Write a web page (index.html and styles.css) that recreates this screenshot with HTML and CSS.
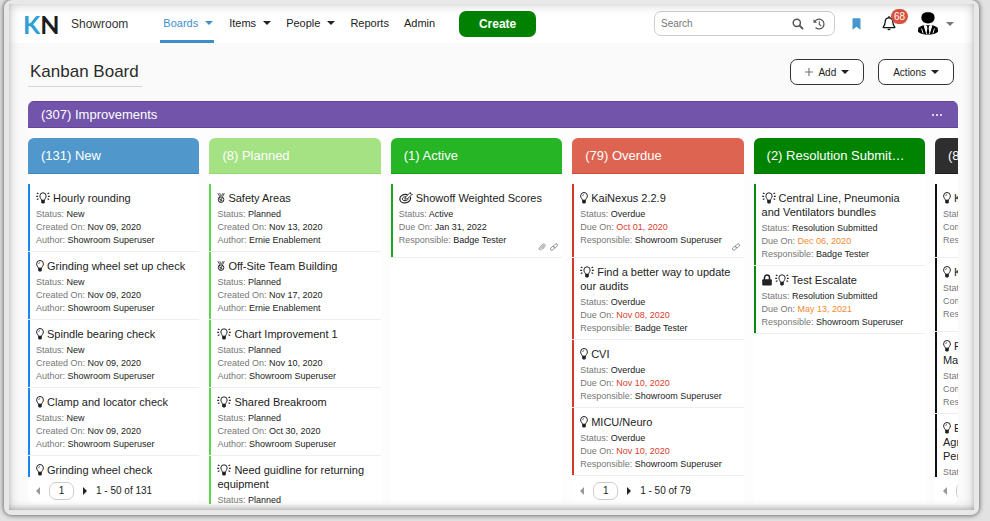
FILE: index.html
```html
<!DOCTYPE html>
<html lang="en">
<head>
<meta charset="utf-8">
<title>Kanban Board</title>
<link rel="stylesheet" href="styles.css">
</head>
<body>
<svg class="sprite" aria-hidden="true">
  <symbol id="bulb" viewBox="0 0 8 12"><path d="M2.500 8.200C2.400 6.900.6 6 .6 3.900a3.400 3.400 0 0 1 6.800 0C7.400 6 5.600 6.900 5.500 8.200z" fill="none" stroke="currentColor"/><path d="M2.200 8h3.600v2.400L4.900 11.600H3.100l-.9-1.200z" fill="currentColor"/><path d="M2.600 4A1.500 1.500 0 0 1 4 2.500" fill="none" stroke="currentColor" stroke-width=".6"/></symbol>
  <symbol id="bulb-lit" viewBox="0 0 14 12"><path d="M5.500 8.200C5.400 6.900 3.900 6 3.900 3.900a3.100 3.100 0 0 1 6.200 0C10.100 6 8.600 6.900 8.500 8.200z" fill="none" stroke="currentColor"/><path d="M5.200 8h3.600v2.400l-.9 1.200H6.100l-.9-1.200z" fill="currentColor"/><path d="M.8 1l1.700.8M.2 4.300h1.900M.8 7.500l1.700-.8M13.200 1l-1.700.8M13.800 4.300h-1.900M13.200 7.500l-1.700-.8" stroke="currentColor" stroke-width="1.200"/></symbol>
  <symbol id="medal" viewBox="0 0 9 12"><path d="M1 .6l2.300 4.200M3 .6l1.700 3.600M8.200.6L6.300 4.600M6.600.6L5.300 3.400" stroke="currentColor" fill="none" stroke-width=".9"/><circle cx="4.600" cy="7.900" r="3.100" fill="none" stroke="currentColor" stroke-width="1.100"/><path d="M.8 5.300l2.600 2.500 2.800-1.300M3.200 9.500l2.900-.7M4.700 6.700v3" stroke="currentColor" fill="none" stroke-width=".9"/></symbol>
  <symbol id="target" viewBox="0 0 14 12"><path d="M8.500 2.700C4.600 1.600.8 3.800.8 6.900c0 2.300 2.200 4 5.200 4s5.600-2 5.600-4.600c0-.6-.1-1-.3-1.400" fill="none" stroke="currentColor" stroke-width="1.200"/><path d="M7 4.900c-2-.3-3.700.6-3.700 2 0 1.100 1.100 1.800 2.700 1.800 1.800 0 3.100-.9 3.200-2.100" fill="none" stroke="currentColor"/><path d="M5.800 7.200l.7-2L10.300 1.400l.9-1 .4 1.600 1.700.3-1 1-4 3.400z" fill="none" stroke="currentColor" stroke-width=".9"/></symbol>
  <symbol id="lock" viewBox="0 0 10 12"><path d="M2.500 6V3.500a2.500 2.500 0 0 1 5 0V6" fill="none" stroke="currentColor" stroke-width="1.500"/><rect x=".2" y="5.300" width="9.600" height="6.200" rx="1" fill="currentColor"/></symbol>
  <symbol id="clip" viewBox="0 0 8 8"><path d="M2.300 5.500l2.600-3c.7-.7 1.600.1 1 .8L3.300 6.500C2.300 7.600.3 6.500 1.300 5l3-3.500C5.800 0 8 1.600 6.900 3.300L4.500 6.200" fill="none" stroke="currentColor" stroke-width=".8"/></symbol>
  <symbol id="link" viewBox="0 0 8 8"><g fill="none" stroke="currentColor" stroke-width=".9"><rect x="3.200" y="1.500" width="4.600" height="2.700" rx="1.350" transform="rotate(-45 5.500 2.850)"/><rect x=".2" y="3.900" width="4.600" height="2.700" rx="1.350" transform="rotate(-45 2.500 5.250)"/></g></symbol>
</svg>

<div class="frame">
  <header class="topbar">
    <a class="logo" href="#"><span class="logo-k">K</span>N</a>
    <span class="site">Showroom</span>
    <nav class="nav">
      <a class="nav-link current" href="#">Boards<i class="caret"></i></a>
      <a class="nav-link" href="#">Items<i class="caret"></i></a>
      <a class="nav-link" href="#">People<i class="caret"></i></a>
      <a class="nav-link" href="#">Reports</a>
      <a class="nav-link" href="#">Admin</a>
    </nav>
    <button class="create" type="button">Create</button>
    <div class="tools">
      <div class="search">
        <input class="search-input" type="search" placeholder="Search" aria-label="Search">
        <svg class="search-icon" viewBox="0 0 12 12"><circle cx="4.800" cy="4.800" r="3.600" fill="none" stroke="currentColor" stroke-width="1.500"/><path d="M7.500 7.500l3.600 3.600" stroke="currentColor" stroke-width="1.800"/></svg>
        <svg class="search-icon" viewBox="0 0 12 12"><path d="M1.700 3.800A4.900 4.900 0 1 1 2.600 9.500" fill="none" stroke="currentColor" stroke-width="1.200"/><path d="M.5 1.300v3.500h3.600z" fill="currentColor"/><path d="M6.300 3.200v3.200l2 1.300" fill="none" stroke="currentColor" stroke-width="1.100"/></svg>
      </div>
      <button class="icon-button bookmark" type="button" aria-label="Bookmarks"><svg viewBox="0 0 9 12"><path d="M.5 1.200q0-1 1-1h6q1 0 1 1v10.500l-4-3-4 3z" fill="currentColor"/></svg></button>
      <button class="icon-button bell" type="button" aria-label="Notifications"><svg viewBox="0 0 14 15"><path d="M7 1.800c-2.400 0-3.800 1.700-3.800 4 0 3.200-.9 4.200-2 5.300v.5h11.600v-.5c-1.100-1.100-2-2.100-2-5.300 0-2.300-1.400-4-3.800-4z" fill="none" stroke="currentColor" stroke-width="1.300" stroke-linejoin="round"/><path d="M6.200.3h1.600v1.500H6.200zM5.400 12.700h3.200a1.600 1.600 0 0 1-3.200 0z" fill="currentColor"/></svg><span class="badge">68</span></button>
      <button class="icon-button account" type="button" aria-label="Account"><svg viewBox="0 0 20 23"><path d="M10 .2c4.300 0 6.600 1.600 6.600 5.600 0 3.500-2.900 5.700-6.600 5.700S3.400 9.300 3.400 5.800C3.400 1.800 5.700.2 10 .2z"/><path d="M5.200 13.300L.8 15.300C.1 16.500 0 18 0 19.800 2 21.600 5.500 22.800 10 22.800s8-1.200 10-3c0-1.800-.1-3.300-.8-4.500l-4.400-2z"/><path d="M5.600 13.600l2-.7L10 15l2.400-2.100 2 .7-2.700 8.600H8.300z" fill="#fff"/><path d="M8.900 14.200h2.200l-.5 2 .8 4.700-1.400 1.500-1.400-1.500.8-4.700z"/><path d="M3.600 16.500l1.500 5M16.400 16.500l-1.500 5" stroke="#fff" stroke-width=".9"/></svg><i class="caret"></i></button>
    </div>
  </header>

  <main class="page">
    <div class="page-head">
      <h1 class="page-title">Kanban Board</h1>
      <div class="actions">
        <button class="outline" type="button"><svg class="plus" viewBox="0 0 8 8"><path d="M4 0v8M0 4h8" stroke="currentColor" stroke-width="1.200"/></svg>Add<i class="caret"></i></button>
        <button class="outline" type="button">Actions<i class="caret"></i></button>
      </div>
    </div>

    <section class="board">
      <div class="board-head"><h2 class="board-title">(307) Improvements</h2><button class="more" type="button" aria-label="More"><i></i><i></i><i></i></button></div>
      <div class="columns">

        <section class="column new">
          <h3 class="column-head">(131) New</h3>
          <ul class="cards">
            <li class="card"><h4><svg class="ico wide"><use href="#bulb-lit"/></svg>Hourly rounding</h4><p>Status: <b>New</b></p><p>Created On: <b>Nov 09, 2020</b></p><p>Author: <b>Showroom Superuser</b></p></li>
            <li class="card"><h4><svg class="ico"><use href="#bulb"/></svg>Grinding wheel set up check</h4><p>Status: <b>New</b></p><p>Created On: <b>Nov 09, 2020</b></p><p>Author: <b>Showroom Superuser</b></p></li>
            <li class="card"><h4><svg class="ico"><use href="#bulb"/></svg>Spindle bearing check</h4><p>Status: <b>New</b></p><p>Created On: <b>Nov 09, 2020</b></p><p>Author: <b>Showroom Superuser</b></p></li>
            <li class="card"><h4><svg class="ico"><use href="#bulb"/></svg>Clamp and locator check</h4><p>Status: <b>New</b></p><p>Created On: <b>Nov 09, 2020</b></p><p>Author: <b>Showroom Superuser</b></p></li>
            <li class="card"><h4><svg class="ico"><use href="#bulb"/></svg>Grinding wheel check</h4></li>
          </ul>
          <div class="pager"><button class="step prev" type="button" aria-label="Previous page" disabled></button><input class="page-no" type="text" value="1" aria-label="Page"><button class="step next" type="button" aria-label="Next page"></button><span>1 - 50 of 131</span></div>
        </section>

        <section class="column planned">
          <h3 class="column-head">(8) Planned</h3>
          <ul class="cards">
            <li class="card"><h4><svg class="ico"><use href="#medal"/></svg>Safety Areas</h4><p>Status: <b>Planned</b></p><p>Created On: <b>Nov 13, 2020</b></p><p>Author: <b>Ernie Enablement</b></p></li>
            <li class="card"><h4><svg class="ico"><use href="#medal"/></svg>Off-Site Team Building</h4><p>Status: <b>Planned</b></p><p>Created On: <b>Nov 17, 2020</b></p><p>Author: <b>Ernie Enablement</b></p></li>
            <li class="card"><h4><svg class="ico wide"><use href="#bulb-lit"/></svg>Chart Improvement 1</h4><p>Status: <b>Planned</b></p><p>Created On: <b>Nov 10, 2020</b></p><p>Author: <b>Showroom Superuser</b></p></li>
            <li class="card"><h4><svg class="ico wide"><use href="#bulb-lit"/></svg>Shared Breakroom</h4><p>Status: <b>Planned</b></p><p>Created On: <b>Oct 30, 2020</b></p><p>Author: <b>Showroom Superuser</b></p></li>
            <li class="card"><h4><svg class="ico wide"><use href="#bulb-lit"/></svg>Need guidline for returning equipment</h4><p>Status: <b>Planned</b></p></li>
          </ul>
        </section>

        <section class="column active">
          <h3 class="column-head">(1) Active</h3>
          <ul class="cards">
            <li class="card attached"><h4><svg class="ico wide"><use href="#target"/></svg>Showoff Weighted Scores</h4><p>Status: <b>Active</b></p><p>Due On: <b>Jan 31, 2022</b></p><p>Responsible: <b>Badge Tester</b></p><div class="attachments"><svg><use href="#clip"/></svg><svg><use href="#link"/></svg></div></li>
          </ul>
        </section>

        <section class="column overdue">
          <h3 class="column-head">(79) Overdue</h3>
          <ul class="cards">
            <li class="card attached"><h4><svg class="ico"><use href="#bulb"/></svg>KaiNexus 2.2.9</h4><p>Status: <b>Overdue</b></p><p>Due On: <b class="late">Oct 01, 2020</b></p><p>Responsible: <b>Showroom Superuser</b></p><div class="attachments"><svg><use href="#link"/></svg></div></li>
            <li class="card"><h4><svg class="ico wide"><use href="#bulb-lit"/></svg>Find a better way to update our audits</h4><p>Status: <b>Overdue</b></p><p>Due On: <b class="late">Nov 08, 2020</b></p><p>Responsible: <b>Badge Tester</b></p></li>
            <li class="card"><h4><svg class="ico"><use href="#bulb"/></svg>CVI</h4><p>Status: <b>Overdue</b></p><p>Due On: <b class="late">Nov 10, 2020</b></p><p>Responsible: <b>Showroom Superuser</b></p></li>
            <li class="card"><h4><svg class="ico"><use href="#bulb"/></svg>MICU/Neuro</h4><p>Status: <b>Overdue</b></p><p>Due On: <b class="late">Nov 10, 2020</b></p><p>Responsible: <b>Showroom Superuser</b></p></li>
          </ul>
          <div class="pager"><button class="step prev" type="button" aria-label="Previous page" disabled></button><input class="page-no" type="text" value="1" aria-label="Page"><button class="step next" type="button" aria-label="Next page"></button><span>1 - 50 of 79</span></div>
        </section>

        <section class="column resolved">
          <h3 class="column-head">(2) Resolution Submitted</h3>
          <ul class="cards">
            <li class="card"><h4><svg class="ico wide"><use href="#bulb-lit"/></svg>Central Line, Pneumonia and Ventilators bundles</h4><p>Status: <b>Resolution Submitted</b></p><p>Due On: <b class="soon">Dec 06, 2020</b></p><p>Responsible: <b>Badge Tester</b></p></li>
            <li class="card"><h4><svg class="ico lock"><use href="#lock"/></svg><svg class="ico wide"><use href="#bulb-lit"/></svg>Test Escalate</h4><p>Status: <b>Resolution Submitted</b></p><p>Due On: <b class="soon">May 13, 2021</b></p><p>Responsible: <b>Showroom Superuser</b></p></li>
          </ul>
        </section>

        <section class="column complete">
          <h3 class="column-head">(8)</h3>
          <ul class="cards">
            <li class="card attached"><h4><svg class="ico"><use href="#bulb"/></svg>K</h4><p>Status:</p><p>Completed</p><p>Responsible:</p></li>
            <li class="card attached"><h4><svg class="ico"><use href="#bulb"/></svg>K</h4><p>Status:</p><p>Completed</p><p>Responsible:</p></li>
            <li class="card"><h4><svg class="ico"><use href="#bulb"/></svg>F<br>Ma</h4><p>Status:</p><p>Completed</p><p>Responsible:</p></li>
            <li class="card"><h4><svg class="ico"><use href="#bulb"/></svg>E<br>Agr<br>Per</h4><p>Status:</p></li>
          </ul>
          <div class="pager"><button class="step prev" type="button" aria-label="Previous page" disabled></button><input class="page-no" type="text" value="1" aria-label="Page"></div>
        </section>

      </div>
    </section>
  </main>
</div>
</body>
</html>
```
FILE: styles.css
```css
* { box-sizing: border-box; }

body, h1, h2, h3, h4, p, ul { margin: 0; padding: 0; font-weight: normal; }

body {
  display: flex;
  height: 100vh;
  padding: 0 11px 6px 4px;
  overflow: hidden;
  background: #e2e2e2;
  color: #222;
  font-family: "Liberation Sans", Arial, Helvetica, sans-serif;
  font-size: 10px;
}

button, input { font: inherit; color: inherit; }
button { padding: 0; border: 0; background: none; }
a { color: inherit; text-decoration: none; }
.sprite { position: absolute; width: 0; height: 0; }

/* Window frame */
.frame {
  position: relative;
  display: flex;
  flex: 1;
  flex-direction: column;
  min-width: 0;
  border: 5px solid #e8e8e8;
  border-top-width: 4px;
  border-radius: 8px;
  background: #fafafa;
  box-shadow: 0 0 4px 1px rgba(0, 0, 0, .5);
}

.frame::after {
  content: "";
  position: absolute;
  inset: 0;
  box-shadow: inset 0 0 12px rgba(0, 0, 0, .22), inset 0 -2px 4px rgba(0, 0, 0, .16);
  pointer-events: none;
}

.caret {
  display: inline-block;
  border: 4px solid transparent;
  border-top: 4px solid currentColor;
  border-bottom: 0;
}

/* Top bar */
.topbar {
  display: flex;
  align-items: center;
  height: 39px;
  padding: 0 20px 0 14px;
  background: #fff;
}

.logo {
  width: 48px;
  font-family: Lato, "Liberation Sans", sans-serif;
  font-size: 25px;
  font-weight: bold;
  line-height: 36px;
  color: #1c1c1c;
}

.logo-k { color: #2f9fd6; }
.site { font-size: 12px; color: #333; }

.nav {
  display: flex;
  align-self: stretch;
  gap: 12px;
  margin-left: 32px;
}

.nav-link {
  display: flex;
  align-items: center;
  gap: 7px;
  padding: 2px 0 0 3px;
  border-bottom: 3px solid transparent;
  font-size: 11px;
}

.nav-link.current {
  padding-right: 1px;
  border-color: #3d8fca;
  color: #3d8fca;
}

.create {
  width: 77px;
  height: 26px;
  margin: 0 12px 0 24px;
  border-radius: 7px;
  background: #008200;
  color: #fff;
  font-size: 12px;
  font-weight: bold;
}

.tools {
  display: flex;
  align-items: center;
  margin-left: auto;
}

.search {
  display: flex;
  align-items: center;
  gap: 9px;
  width: 181px;
  height: 25px;
  padding: 0 9px 0 6px;
  border: 1px solid #ccc;
  border-radius: 7px;
  background: #fff;
  color: #555;
}

.search-input {
  flex: 1;
  min-width: 0;
  padding: 0;
  border: 0;
  outline: 0;
  background: none;
}

.search-input::placeholder { color: #777; }
.search-icon { width: 12px; height: 12px; }
.icon-button { position: relative; display: flex; align-items: center; }
.bookmark { margin-left: 17px; color: #4595cf; }
.bookmark svg { width: 9px; height: 12px; }
.bell { margin-left: 21px; color: #111; }
.bell svg { width: 14px; height: 15px; }

.badge {
  position: absolute;
  top: -7px;
  left: 9px;
  width: 17px;
  border-radius: 8px;
  background: #d9523c;
  color: #fff;
  line-height: 15px;
  text-align: center;
}

.account { gap: 8px; margin-left: 22px; color: #777; }
.account svg { width: 20px; height: 23px; fill: #000; }

/* Page */
.page {
  display: flex;
  flex: 1;
  flex-direction: column;
  min-height: 0;
  padding: 0 16px 6px 19px;
}

.page-head {
  display: flex;
  align-items: center;
  justify-content: space-between;
  height: 58px;
  padding-right: 4px;
}

.page-title {
  padding: 1px 3px 0 2px;
  border-bottom: 1px solid #d4d4d4;
  font-size: 17px;
  line-height: 28px;
  color: #2c2c2c;
}

.actions { display: flex; gap: 14px; }

.outline {
  display: flex;
  align-items: center;
  justify-content: center;
  gap: 5px;
  height: 26px;
  padding: 0 14px;
  border: 1px solid #333;
  border-radius: 7px;
  background: #fff;
}

.plus { width: 8px; height: 8px; color: #777; }

/* Board */
.board {
  display: flex;
  flex: 1;
  flex-direction: column;
  gap: 10px;
  min-height: 0;
  overflow: hidden;
  border-radius: 6px;
  background: #fdfdfd;
}

.board-head {
  display: flex;
  align-items: center;
  justify-content: space-between;
  height: 27px;
  padding: 0 16px 0 13px;
  border: solid #63449f;
  border-width: 1px 0;
  background: #7254aa;
  color: #fff;
}

.board-title { font-size: 13px; }
.more { display: flex; gap: 2px; }
.more i { width: 2px; height: 2px; border-radius: 1px; background: #fff; }

.columns {
  display: grid;
  grid-auto-flow: column;
  grid-auto-columns: calc((100% - 73px) / 5);
  grid-template-rows: minmax(0, 1fr);
  flex: 1;
  gap: 10px;
  min-height: 0;
}

.column {
  display: flex;
  flex-direction: column;
  min-width: 0;
  background: #fff;
}

.column-head {
  flex: none;
  margin-bottom: 10px;
  padding: 0 17px 0 13px;
  overflow: hidden;
  border-radius: 6px 6px 0 0;
  background: var(--head);
  box-shadow: inset 0 -1px 0 var(--edge);
  color: #fff;
  font-size: 13px;
  line-height: 36px;
  text-overflow: ellipsis;
  white-space: nowrap;
}

.new { --head: #5097cc; --edge: #3f86c0; --bar: #1b87ee; }
.planned { --head: #a4e284; --edge: #93d873; --bar: #5bd64b; }
.active { --head: #25b525; --edge: #0fa50f; --bar: #17a81c; }
.overdue { --head: #dd6450; --edge: #d14d38; --bar: #d8382a; }
.resolved { --head: #008400; --edge: #007800; --bar: #078a0c; }
.complete { --head: #2e2e2e; --edge: #1c1c1c; --bar: #111; }

.cards {
  flex: 1;
  min-height: 0;
  overflow: hidden;
  list-style: none;
}

.card {
  position: relative;
  padding: 7px 8px 4px 8px;
  border-bottom: 1px solid #eee;
}

.card::before {
  content: "";
  position: absolute;
  inset: 0 auto 0 0;
  width: 2px;
  background: var(--bar);
}

.card.attached { padding-bottom: 10px; }

.card h4 {
  margin-bottom: 3px;
  font-size: 11px;
  line-height: 14px;
}

.card p {
  color: #777;
  font-size: 9px;
  line-height: 13px;
  white-space: nowrap;
}

.card b { font-weight: normal; color: #222; }
.card .late { color: #d8402e; }
.card .soon { color: #f58a32; }

.ico {
  width: 8px;
  height: 12px;
  margin-right: 3px;
  vertical-align: -2px;
}

.ico.wide { width: 14px; }
.ico.lock { width: 10px; }

.attachments {
  position: absolute;
  right: 4px;
  bottom: 6px;
  display: flex;
  gap: 4px;
  color: #888;
}

.attachments svg { width: 8px; height: 8px; }

.pager {
  display: flex;
  flex: none;
  align-items: center;
  gap: 9px;
  height: 27px;
  padding-left: 8px;
}

.step {
  border: 4px solid transparent;
  border-right-width: 0;
  border-left-color: #222;
}

.step.prev {
  border-right: 4px solid #999;
  border-left-width: 0;
}

.page-no {
  width: 25px;
  height: 18px;
  padding: 0;
  border: 1px solid #ccc;
  border-radius: 7px;
  background: #fff;
  text-align: center;
}
```
